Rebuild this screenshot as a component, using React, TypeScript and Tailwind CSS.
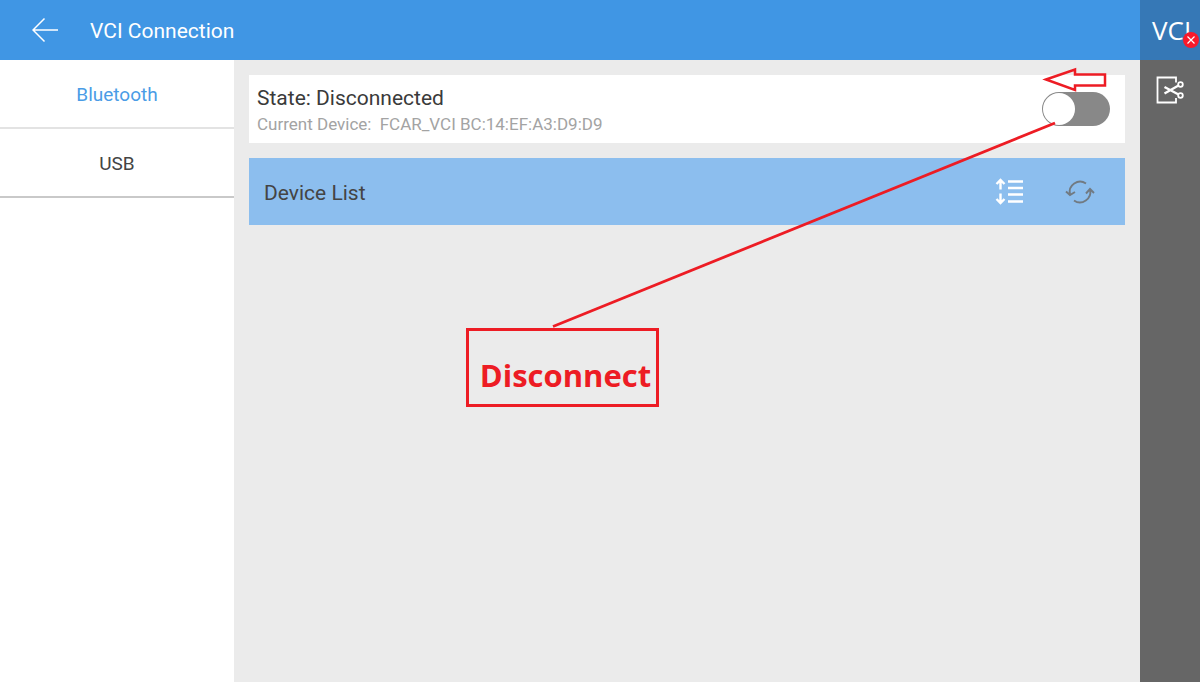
import { useState } from "react";

const tabs = ["Bluetooth", "USB"];

function Header() {
  return (
    <header className="flex h-[60px] shrink-0 text-white">
      <div className="flex flex-1 items-center gap-8 bg-[#4096e4] pl-8">
        <button aria-label="Back" className="cursor-pointer">
          <svg width="26" height="26" viewBox="0 0 26 26" fill="none" stroke="currentColor" strokeWidth="1.5">
            <path d="M12.5 1.5L1 13l11.5 11.5M1 13h25" />
          </svg>
        </button>
        <h1 className="pt-0.5 text-[21px] leading-6">VCI Connection</h1>
      </div>
      <div className="relative flex w-[60px] items-center bg-[#3678b6] pl-3">
        <span className="font-['Open_Sans','Noto_Sans',sans-serif] text-[26px] leading-8">VCI</span>
        {/* Not connected badge */}
        <svg className="absolute right-px bottom-3" width="16" height="16" viewBox="0 0 16 16">
          <circle cx="8" cy="8" r="8" fill="#f8192b" />
          <path d="M4.5 4.5l7 7M11.5 4.5l-7 7" stroke="#fff" strokeWidth="1.2" />
        </svg>
      </div>
    </header>
  );
}

function Sidebar({ active, onSelect }: { active: string; onSelect: (tab: string) => void }) {
  return (
    <nav className="w-[234px] shrink-0 bg-white">
      {tabs.map((tab) => (
        <button
          key={tab}
          onClick={() => onSelect(tab)}
          className={
            "block w-full h-[69px] cursor-pointer border-b-2 pt-0.5 text-[19px] leading-6 " +
            (tab === active ? "border-[#e3e3e3] text-[#4a9ce6]" : "border-[#c9c9c9] text-[#444444]")
          }
        >
          {tab}
        </button>
      ))}
    </nav>
  );
}

function StateCard() {
  const [on, setOn] = useState(false);

  return (
    <section className="flex h-[68px] items-center justify-between bg-white pr-[15px] pl-2">
      <div className="pt-0.5">
        <p className="text-[21px] leading-7 text-[#3a3a3a]">State: Disconnected</p>
        <p className="text-[17px] leading-6 text-[#a3a3a3]">
          <span className="mr-1">Current Device:</span> FCAR_VCI BC:14:EF:A3:D9:D9
        </p>
      </div>
      <label className="relative block h-[34px] w-[68px] cursor-pointer">
        <input
          type="checkbox"
          checked={on}
          onChange={() => setOn(!on)}
          aria-label="Connection"
          className="peer block h-full w-full cursor-pointer appearance-none rounded-full bg-[#888888] checked:bg-[#4096e4]"
        />
        <span className="pointer-events-none absolute inset-y-px left-px w-8 rounded-full bg-white peer-checked:left-[35px]" />
      </label>
    </section>
  );
}

function DeviceList() {
  return (
    <section className="mt-[15px] flex h-[67px] items-center justify-between bg-[#8cbeee] pr-[30px] pl-[15px]">
      <h2 className="pt-0.5 text-[21px] leading-6 text-[#444444]">Device List</h2>
      <div className="flex gap-10">
        <button aria-label="Sort" className="cursor-pointer text-white">
          <svg width="30" height="28" viewBox="0 0 30 28" fill="none" stroke="currentColor" strokeWidth="2.4">
            <path d="M5.5 11.500V2M1.500 6l4-4 4 4M5.500 15.500V25M1.500 21l4 4 4-4" />
            <path d="M13 3.500h15M13 10h15M13 16.500h15M13 23.500h15" />
          </svg>
        </button>
        <button aria-label="Refresh" className="cursor-pointer text-[#717a82]">
          <svg width="30" height="28" viewBox="0 0 30 28" fill="none" stroke="currentColor" strokeWidth="1.9">
            <path d="M21 5.500A10.400 10.400 0 0 0 5 16.500M1 13.500l4 3.500 5-3" />
            <path d="M9 22.500A10.400 10.400 0 0 0 25 11.500M29 15l-4-4-4 4.500" />
          </svg>
        </button>
      </div>
    </section>
  );
}

function Callout() {
  return (
    <div className="pointer-events-none absolute top-0 right-0 h-[350px] w-[680px]">
      {/* Arrow and pointer line */}
      <svg className="absolute inset-0" width="680" height="350" viewBox="0 0 680 350" fill="none" stroke="#ed1c24">
        <path d="M586 19.500L615 9.500v5h30v11h-30v4.500z" strokeWidth="2.500" />
        <path d="M93 266.500L595 63" strokeWidth="2.800" />
      </svg>
      <div className="absolute top-[268px] left-[6px] flex h-[79px] w-[193px] items-center justify-center border-[3px] border-[#ed1c24] pt-3.5 pl-1.5 font-['Open_Sans','Noto_Sans',sans-serif] text-[31px] leading-10 font-bold text-[#ed1c24]">
        Disconnect
      </div>
    </div>
  );
}

function ToolRail() {
  return (
    <aside className="flex w-[60px] shrink-0 justify-center bg-[#666666] pt-4">
      <button aria-label="Screenshot" className="h-7 cursor-pointer text-white">
        <svg width="28" height="28" viewBox="0 0 28 28" fill="none" stroke="currentColor" strokeWidth="1.8">
          <path d="M20 6.500V1.500H1.500v25H20V22" />
          <path d="M8.500 11l14 7.500M8.500 17.500l14-8" strokeWidth="2.300" />
          <circle cx="24.500" cy="8.500" r="2.300" />
          <circle cx="24.500" cy="19.500" r="2.300" />
        </svg>
      </button>
    </aside>
  );
}

export default function App() {
  const [tab, setTab] = useState("Bluetooth");

  return (
    <div className="flex min-h-screen flex-col bg-[#ebebeb] font-[Roboto,sans-serif]">
      <Header />
      <div className="flex flex-1">
        <Sidebar active={tab} onSelect={setTab} />
        <main className="relative min-w-0 flex-1 px-[15px] pt-[15px]">
          <StateCard />
          <DeviceList />
          <Callout />
        </main>
        <ToolRail />
      </div>
    </div>
  );
}
